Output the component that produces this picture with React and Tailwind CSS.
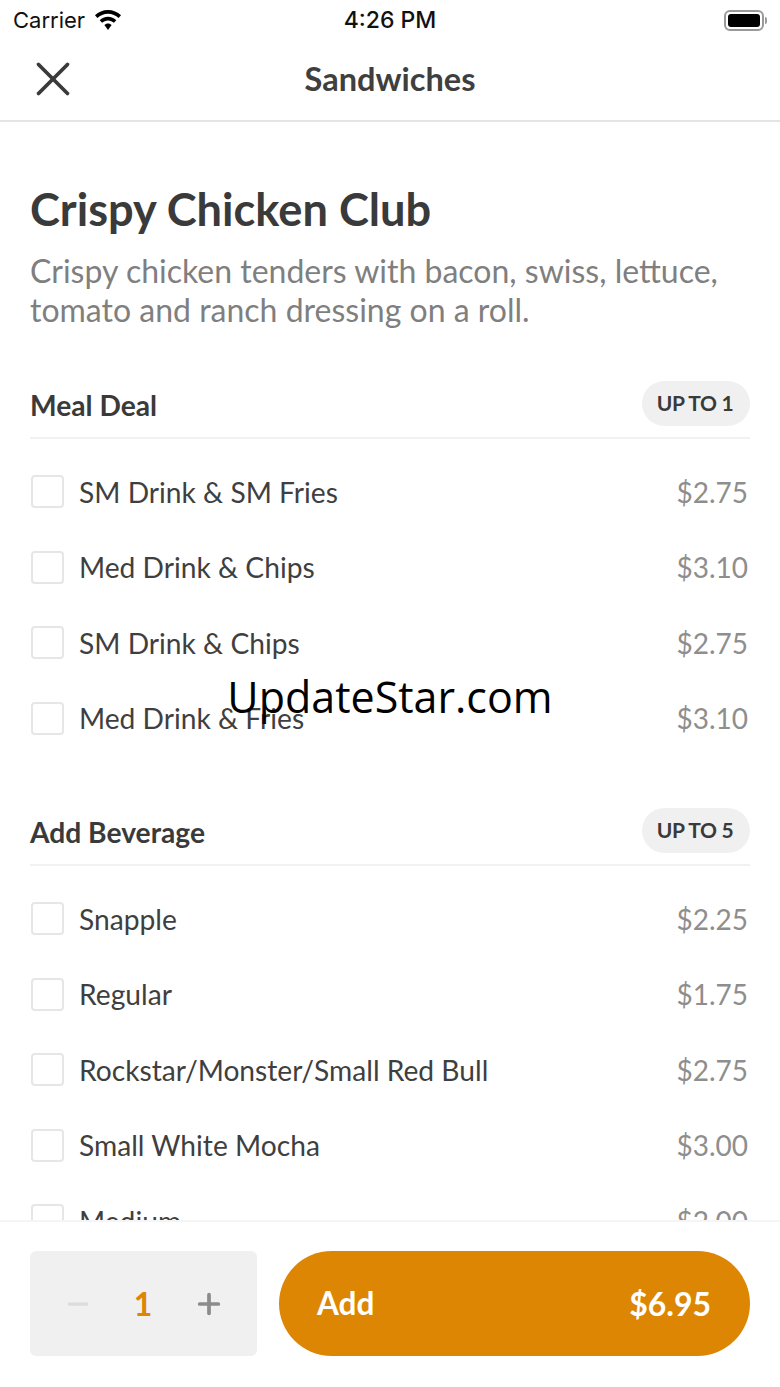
import React from 'react';
import { X, Minus, Plus } from 'lucide-react';

const sections = [
  {
    title: 'Meal Deal',
    limit: 'UP TO 1',
    items: [
      ['SM Drink & SM Fries', '$2.75'],
      ['Med Drink & Chips', '$3.10'],
      ['SM Drink & Chips', '$2.75'],
      ['Med Drink & Fries', '$3.10'],
    ],
  },
  {
    title: 'Add Beverage',
    limit: 'UP TO 5',
    items: [
      ['Snapple', '$2.25'],
      ['Regular', '$1.75'],
      ['Rockstar/Monster/Small Red Bull', '$2.75'],
      ['Small White Mocha', '$3.00'],
      ['Medium', '$2.00'],
    ],
  },
];

function StatusBar() {
  return (
    <div className="h-[40px] shrink-0 grid grid-cols-3 items-center pl-[13px] pr-[13px] text-[#111] font-['Inter',sans-serif]">
      <div className="flex items-center gap-[9px]">
        <span className="text-[22px] font-normal leading-none">Carrier</span>
        <svg width="28" height="21" viewBox="0 0 28 21" fill="#000">
          <path d="M14 0C9 0 4.4 2 1 5.300L3.400 8C6.200 5.300 9.900 3.700 14 3.700S21.800 5.300 24.600 8L27 5.300C23.600 2 19 0 14 0Z" />
          <path d="M14 6.800C10.800 6.800 7.900 8 5.700 10.200L8.100 12.800C9.600 11.300 11.700 10.400 14 10.400S18.400 11.300 19.900 12.800L22.300 10.200C20.100 8 17.200 6.800 14 6.800Z" />
          <path d="M14 13.600C12.600 13.600 11.300 14.200 10.400 15.100L14 20L17.600 15.100C16.700 14.200 15.400 13.600 14 13.600Z" />
        </svg>
      </div>
      <span className="text-[23px] font-medium text-center leading-none whitespace-nowrap">4:26 PM</span>
      <div className="flex items-center justify-end gap-[1px]">
        <div className="w-[40px] h-[21px] rounded-[6px] border-2 border-[#999] p-[2px]">
          <div className="w-full h-full rounded-[3px] bg-black" />
        </div>
        <div className="w-[2px] h-[7px] bg-[#999] rounded-r-sm" />
      </div>
    </div>
  );
}

function OptionRow({ name, price }) {
  return (
    <div className="h-[75.5px] shrink-0 flex items-center justify-between pr-[2px]">
      <div className="flex items-center gap-[15px]">
        <div className="ml-[1px] w-[33px] h-[33px] rounded-[4px] border-2 border-[#e6e6e6] bg-white" />
        <span className="text-[28.2px] text-[#3f3f3f] leading-none">{name}</span>
      </div>
      <span className="text-[28px] text-[#8e8e8e] leading-none">{price}</span>
    </div>
  );
}

function Section({ title, limit, items }) {
  return (
    <section className="mb-[52px]">
      <div className="h-[58px] flex items-start justify-between border-b-2 border-[#f1f1f1]">
        <h2 className="mt-[10px] text-[28.2px] font-bold text-[#3a3a3a] leading-none">{title}</h2>
        <span className="h-[45px] w-[108px] flex items-center justify-center rounded-full bg-[#f0f0f0] text-[21px] font-bold text-[#3a3a3a] tracking-[-0.3px] pr-[2px] pb-[2px]">
          {limit}
        </span>
      </div>
      <div className="pt-[15px] flex flex-col">
        {items.map(([name, price]) => (
          <OptionRow key={name} name={name} price={price} />
        ))}
      </div>
    </section>
  );
}

export default function App() {
  return (
    <div className="relative w-[780px] h-[1387px] bg-white flex flex-col overflow-hidden font-['Lato',sans-serif]">
      <StatusBar />

      {/* Nav */}
      <header className="h-[82px] shrink-0 relative flex items-center justify-center border-b-2 border-[#e4e4e4]">
        <X className="absolute left-[23.500px] top-[10px] text-[#3a3a3a]" size={58} strokeWidth={1.5} />
        <h1 className="text-[32.5px] font-bold text-[#3f3f3f] leading-none -mt-[2px]">Sandwiches</h1>
      </header>

      <main className="flex-1 min-h-0 overflow-hidden px-[30px] pt-[57px]">
        <h1 className="text-[45.2px] font-bold text-[#3a3a3a] leading-[60px]">Crispy Chicken Club</h1>
        <p className="mt-[13px] text-[32px] text-[#7f7f7f] leading-[38.500px] w-[720px]">
          Crispy chicken tenders with bacon, swiss, lettuce, tomato and ranch dressing on a roll.
        </p>
        <div className="mt-[52px]">
          {sections.map((s) => (
            <Section key={s.title} title={s.title} limit={s.limit} items={s.items} />
          ))}
        </div>
      </main>

      {/* Footer */}
      <footer className="h-[167px] shrink-0 bg-white border-t-2 border-[#f5f5f5] px-[30px] pt-[29px] flex gap-[22px]">
        <div className="w-[227px] h-[105px] rounded-[6px] bg-[#f0f0f0] flex items-center pl-[33px] pr-[32px] justify-between">
          <Minus className="text-[#dcdcdc]" size={30} strokeWidth={2.6} />
          <span className="text-[32px] font-bold text-[#dd8604] leading-none">1</span>
          <Plus className="text-[#8c8c8c]" size={32} strokeWidth={2.8} />
        </div>
        <button className="w-[471px] h-[105px] rounded-full bg-[#dd8604] flex items-center justify-between pl-[38px] pr-[39px] text-white text-[31.5px] font-bold">
          <span>Add</span>
          <span className="text-[32px]">$6.95</span>
        </button>
      </footer>

      {/* Watermark */}
      <div className="absolute left-0 right-0 top-[668px] text-center text-[43px] leading-[58px] text-black font-['Open_Sans',sans-serif]">
        UpdateStar.com
      </div>
    </div>
  );
}
